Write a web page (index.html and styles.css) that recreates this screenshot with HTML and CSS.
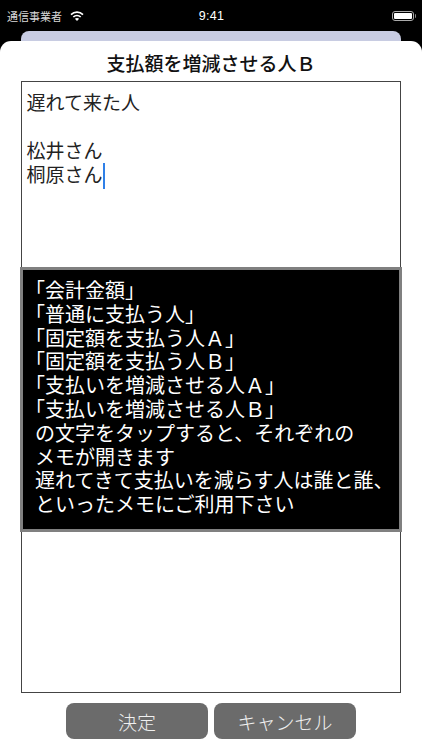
FILE: index.html
```html
<!DOCTYPE html>
<html lang="ja">
<head>
<meta charset="utf-8">
<title>支払額を増減させる人Ｂ</title>
<link rel="stylesheet" href="styles.css">
</head>
<body>
<div class="screen">
  <header class="status">
    <div class="status-left">
      <span class="carrier">通信事業者</span>
      <svg class="wifi" viewBox="0 0 14 10" width="14" height="10"><path class="wifi-arc" d="M1 3.600C4.400.400 9.600.400 13 3.600"/><path class="wifi-arc" d="M3.300 6C5.400 4 8.600 4 10.700 6"/><path class="wifi-dot" d="M7 10 4.900 7.800C6.100 6.800 7.900 6.800 9.100 7.800z"/></svg>
    </div>
    <div class="clock">9:41</div>
    <div class="status-right">
      <span class="battery"><span class="battery-fill"></span></span><span class="battery-cap"></span>
    </div>
  </header>
  <div class="back-card"></div>
  <main class="sheet">
    <h1 class="title">支払額を増減させる人Ｂ</h1>
    <div class="memo">
      <p class="memo-line">遅れて来た人</p>
      <p class="memo-line">&nbsp;</p>
      <p class="memo-line">松井さん</p>
      <p class="memo-line">桐原さん<span class="caret"></span></p>
      <div class="help">
        <p class="help-line">「会計金額」</p>
        <p class="help-line">「普通に支払う人」</p>
        <p class="help-line">「固定額を支払う人Ａ」</p>
        <p class="help-line">「固定額を支払う人Ｂ」</p>
        <p class="help-line">「支払いを増減させる人Ａ」</p>
        <p class="help-line">「支払いを増減させる人Ｂ」</p>
        <p class="help-line">の文字をタップすると、それぞれの</p>
        <p class="help-line">メモが開きます</p>
        <p class="help-line">遅れてきて支払いを減らす人は誰と誰、</p>
        <p class="help-line">といったメモにご利用下さい</p>
      </div>
    </div>
    <div class="actions">
      <button class="btn">決定</button>
      <button class="btn">キャンセル</button>
    </div>
  </main>
</div>
</body>
</html>
```
FILE: styles.css
```css
* { box-sizing: border-box; }
html, body { margin: 0; padding: 0; }
body {
  width: 422px;
  height: 750px;
  overflow: hidden;
  background: #000;
  font-family: "Liberation Sans", "Noto Sans CJK JP", sans-serif;
}
.screen { display: flex; flex-direction: column; height: 750px; }
.status {
  height: 31px;
  display: grid;
  grid-template-columns: 1fr auto 1fr;
  align-items: center;
  padding: 0 6px 0 7px;
  color: #fff;
  flex: none;
}
.status-left { display: flex; align-items: center; gap: 8px; }
.carrier { font-size: 11px; color: #d8d8d8; font-family: "Noto Sans CJK JP", sans-serif; }
.wifi { display: block; }
.wifi-arc { fill: none; stroke: #fff; stroke-width: 1.700; }
.wifi-dot { fill: #fff; }
.clock { font-size: 12.500px; font-weight: 400; letter-spacing: .3px; text-align: center; }
.status-right { display: flex; justify-content: flex-end; align-items: center; }
.battery {
  width: 22px; height: 10px;
  border: 1px solid #aaa;
  border-radius: 3px;
  padding: 1px;
  display: block;
}
.battery-fill { display: block; height: 100%; background: #fff; border-radius: 1px; }
.battery-cap { width: 1.500px; height: 4px; background: #888; margin-left: 1px; border-radius: 0 1px 1px 0; }
.back-card {
  height: 10px;
  margin: 0 21px;
  background: #c8cce2;
  border-radius: 8px 8px 0 0;
  flex: none;
}
.sheet {
  flex: 1;
  background: #fff;
  border-radius: 11px 11px 0 0;
  display: flex;
  flex-direction: column;
  align-items: center;
  padding-top: 10px;
}
.title {
  margin: 0;
  height: 30px;
  font-size: 19px;
  line-height: 24px;
  font-weight: 500;
  color: #111;
  font-family: "Noto Sans CJK JP", sans-serif;
}
.memo {
  position: relative;
  width: 380px;
  height: 612px;
  border: 1.500px solid #444;
  padding: 8px 4.500px;
  flex: none;
  font-family: "Noto Sans CJK JP", sans-serif;
  color: #222;
}
.memo-line { margin: 0; font-size: 19px; line-height: 24px; font-weight: 400; }
.caret {
  display: inline-block;
  width: 2px;
  height: 26px;
  background: #2f80e8;
  vertical-align: -7px;
  margin-top: -2px;
}
.help {
  position: absolute;
  left: -2px;
  right: -2px;
  top: 185px;
  height: 265px;
  background: #000;
  border: 3px solid #808080;
  padding: 8px 12px;
  color: #fff;
  text-spacing-trim: trim-start;
}
.help-line { margin: 0; font-size: 20px; line-height: 23.800px; font-weight: 400; white-space: nowrap; }
.actions {
  display: flex;
  gap: 6px;
  margin-top: 10px;
  width: 290px;
}
.btn {
  width: 142px;
  height: 36px;
  border: 0;
  border-radius: 8px;
  background: #6b6b6b;
  color: #f0f0f0;
  font-size: 19px;
  font-weight: 300;
  padding: 0;
  font-family: "Noto Sans CJK JP", sans-serif;
}
```
